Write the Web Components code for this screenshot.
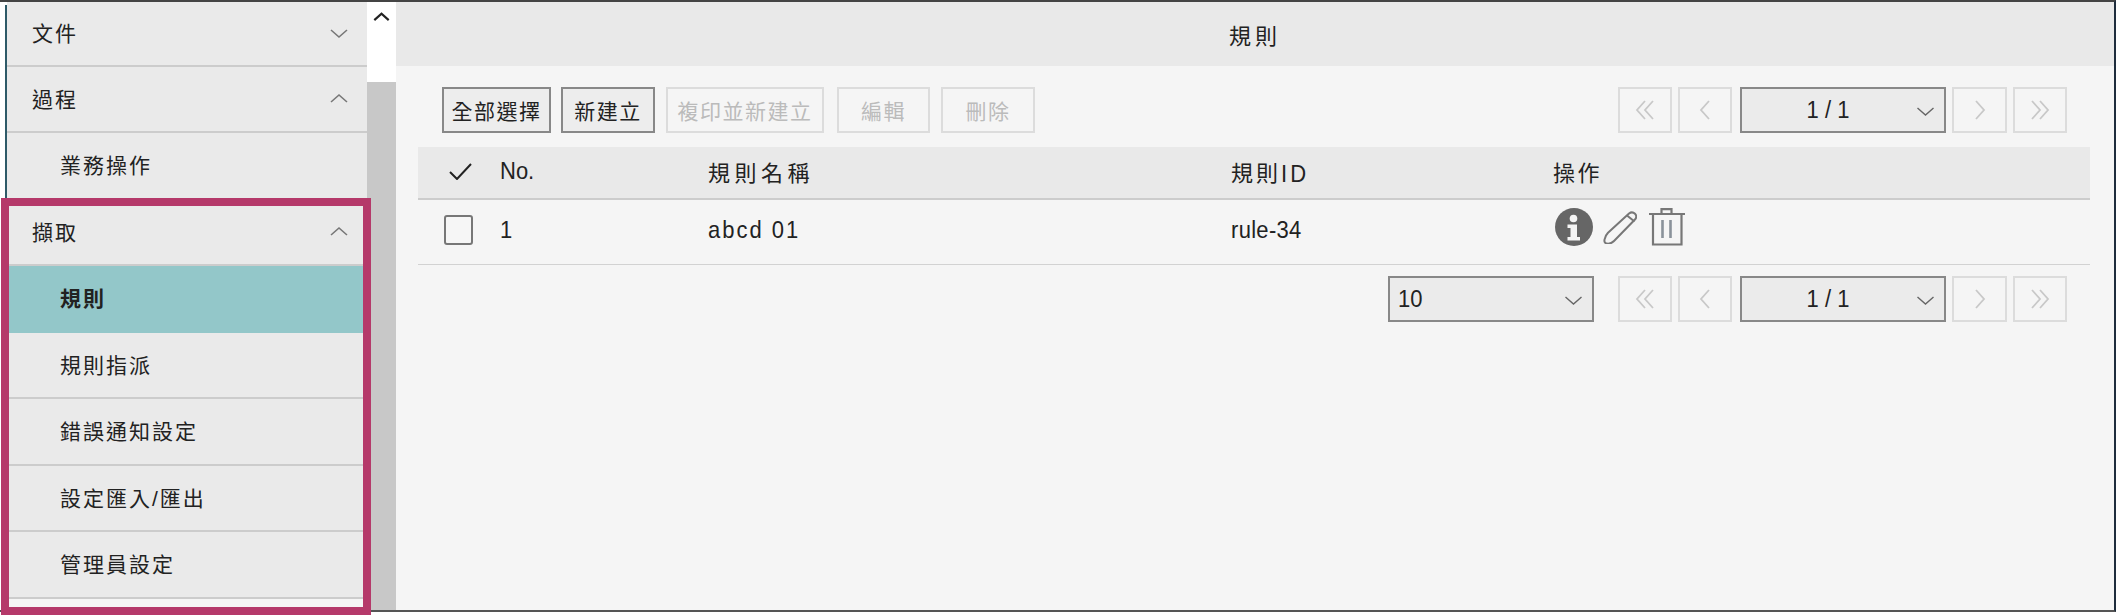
<!DOCTYPE html>
<html lang="zh-Hant">
<head>
<meta charset="utf-8">
<title>規則</title>
<style>
  html, body { margin: 0; padding: 0; background: #fff; }
  body { font-family: "Liberation Sans", "Noto Sans CJK TC", sans-serif; font-size: 21px; color: #222; }
</style>
</head>
<body>

<app-shell>
  <side-nav slot="nav">
    <nav-row kind="group" dir="down">文件</nav-row>
    <nav-row kind="group" dir="up">過程</nav-row>
    <nav-row>業務操作</nav-row>
    <nav-row kind="group" dir="up">擷取</nav-row>
    <nav-row active>規則</nav-row>
    <nav-row>規則指派</nav-row>
    <nav-row>錯誤通知設定</nav-row>
    <nav-row>設定匯入/匯出</nav-row>
    <nav-row>管理員設定</nav-row>
  </side-nav>

  <rules-page slot="main"></rules-page>
</app-shell>

<script>
const FONT = `"Liberation Sans", "Noto Sans CJK TC", sans-serif`;

const chevrons = {
  up: '<polyline points="1,9 9,2 17,9"/>',
  down: '<polyline points="1,2 9,9 17,2"/>',
  left: '<polyline points="10,1 2,10 10,19"/>',
  right: '<polyline points="2,1 10,10 2,19"/>',
  first: '<polyline points="10,1 2,10 10,19"/><polyline points="18,1 10,10 18,19"/>',
  last: '<polyline points="2,1 10,10 2,19"/><polyline points="10,1 18,10 10,19"/>'
};

class AppShell extends HTMLElement {
  constructor(...args) {
    super(...args);
    this.attachShadow({ mode: 'open' }).innerHTML = `
      <style>
        :host { display: block; width: 2116px; height: 616px; box-sizing: border-box; padding-bottom: 4px; background: #fff; }
        .frame {
          display: flex; height: 100%; box-sizing: border-box;
          border-top: 2px solid #444; border-bottom: 2px solid #555; border-right: 2px solid #1f2d3d;
          position: relative;
        }
        .gutter { width: 5px; flex: none; background: #fff; }
        .nav { width: 362px; flex: none; display: flex; }
        .scroll { width: 29px; flex: none; display: flex; flex-direction: column; background: #c8c8c8; }
        .thumb-top { height: 80px; background: #fff; display: flex; justify-content: center; padding-top: 10px; box-sizing: border-box; }
        .thumb-top svg { width: 17px; height: 9px; fill: none; stroke: #222; stroke-width: 2.4; }
        .main { flex: 1; min-width: 0; display: flex; }
        .mark {
          position: absolute; left: 1px; top: 196px; width: 370px; height: 417px; box-sizing: border-box;
          border: 8.5px solid #b5396a; pointer-events: none;
        }
      </style>
      <div class="frame">
        <div class="gutter"></div>
        <div class="nav"><slot name="nav"></slot></div>
        <div class="scroll">
          <div class="thumb-top"><svg viewBox="0 0 18 10"><polyline points="1,9 9,2 17,9"/></svg></div>
        </div>
        <div class="main"><slot name="main"></slot></div>
        <div class="mark"></div>
      </div>`;
  }
}

class SideNav extends HTMLElement {
  constructor(...args) {
    super(...args);
    this.attachShadow({ mode: 'open' }).innerHTML = `
      <style>
        :host { display: block; flex: 1; box-sizing: border-box; border-left: 2px solid #2e5a68; background: #f5f5f5; margin-top: 3px; }
        .list { display: flex; flex-direction: column; margin-top: -3px; }
        ::slotted(:first-child) { height: 64.5px; }
      </style>
      <div class="list"><slot></slot></div>`;
  }
}

class NavRow extends HTMLElement {
  constructor(...args) {
    super(...args);
    const dir = this.getAttribute('dir');
    const group = this.getAttribute('kind') === 'group';
    this.attachShadow({ mode: 'open' }).innerHTML = `
      <style>
        :host {
          display: flex; align-items: center; justify-content: space-between; height: 66.5px; box-sizing: border-box;
          padding: 0 19px 0 ${group ? 25 : 53}px; background: #eaeaea; border-bottom: 2px solid #ccc;
          font: 21px ${FONT}; letter-spacing: 2px; color: #222;
        }
        :host([active]) { background: #93c7c9; border-bottom-color: #93c7c9; font-weight: 700; }
        span { padding-bottom: 2px; }
        svg { width: 18px; height: 11px; fill: none; stroke: #777; stroke-width: 1.6; }
      </style>
      <span><slot></slot></span>
      ${group ? `<svg viewBox="0 0 18 11">${chevrons[dir]}</svg>` : ''}`;
  }
}

class ToolButton extends HTMLElement {
  constructor(...args) {
    super(...args);
    this.attachShadow({ mode: 'open' }).innerHTML = `
      <style>
        :host {
          display: inline-flex; align-items: center; justify-content: center; height: 46px; flex: none; box-sizing: border-box;
          border: 2px solid #888; background: #ededed; color: #222; font: 21px ${FONT}; letter-spacing: 1.5px; white-space: nowrap;
        }
        :host([disabled]) { border-color: #dcdcdc; background: #f5f5f5; color: #bbb; }
      </style>
      <slot></slot>`;
  }
}

class PagerButton extends HTMLElement {
  constructor(...args) {
    super(...args);
    const dir = this.getAttribute('dir');
    const w = dir === 'first' || dir === 'last' ? 20 : 12;
    this.attachShadow({ mode: 'open' }).innerHTML = `
      <style>
        :host {
          display: inline-flex; align-items: center; justify-content: center; width: 54px; height: 46px; flex: none;
          box-sizing: border-box; border: 2px solid #dcdcdc; background: #f5f5f5;
        }
        svg { width: ${w}px; height: 20px; fill: none; stroke: #c8c8c8; stroke-width: 1.8; }
      </style>
      <svg viewBox="0 0 ${w} 20">${chevrons[dir]}</svg>`;
  }
}

class SelectBox extends HTMLElement {
  constructor(...args) {
    super(...args);
    this.attachShadow({ mode: 'open' }).innerHTML = `
      <style>
        :host {
          display: inline-flex; align-items: center; height: 46px; flex: none; box-sizing: border-box;
          border: 2px solid #888; background: #ebebeb; color: #222;
        }
        .val { flex: 1; font: 22px ${FONT}; transform: scaleY(1.1); }
        :host([center]) .val { text-align: center; padding-right: 2px; }
        :host(:not([center])) .val { padding-left: 8px; }
        svg { width: 19px; height: 11px; margin: 2px 9px 0 0; fill: none; stroke: #666; stroke-width: 1.4; }
      </style>
      <span class="val"><slot></slot></span>
      <svg viewBox="0 0 18 11">${chevrons.down}</svg>`;
  }
}

class PagerBar extends HTMLElement {
  constructor(...args) {
    super(...args);
    this.attachShadow({ mode: 'open' }).innerHTML = `
      <style>
        :host { display: flex; align-items: center; gap: 6px; flex: none; }
        select-box { width: 206px; margin-left: 2px; }
      </style>
      <pager-button dir="first"></pager-button>
      <pager-button dir="left"></pager-button>
      <select-box center>1 / 1</select-box>
      <pager-button dir="right" style="width:55px"></pager-button>
      <pager-button dir="last"></pager-button>`;
  }
}

class InfoIcon extends HTMLElement {
  constructor(...args) {
    super(...args);
    this.attachShadow({ mode: 'open' }).innerHTML = `
      <style>:host { display: block; width: 38px; height: 38px; flex: none; } svg { display: block; }</style>
      <svg width="38" height="38" viewBox="0 0 38 38">
        <circle cx="19" cy="19" r="19" fill="#666"/>
        <circle cx="18.500" cy="10.500" r="3.800" fill="#f5f5f5"/>
        <path d="M12.500 16.500h9.500v12.500h3v3.500h-12.500v-3.500h3v-9h-3z" fill="#f5f5f5"/>
      </svg>`;
  }
}

class PencilIcon extends HTMLElement {
  constructor(...args) {
    super(...args);
    this.attachShadow({ mode: 'open' }).innerHTML = `
      <style>:host { display: block; width: 34px; height: 33px; flex: none; } svg { display: block; }</style>
      <svg width="34" height="33" viewBox="0 0 34 33" fill="none" stroke="#777" stroke-width="2" stroke-linejoin="round">
        <path d="M26 2.500c2-1.500 4.500-1.200 6 .3s1.500 3.800.2 5.500L11 30c-2 2-5 3-7.500 2.500-1.800-.3-2.300-2-2-3.800.4-2.500 1.500-5 3.500-7z"/>
        <path d="M24 4.500l7.500 6"/>
      </svg>`;
  }
}

class TrashIcon extends HTMLElement {
  constructor(...args) {
    super(...args);
    this.attachShadow({ mode: 'open' }).innerHTML = `
      <style>:host { display: block; width: 36px; height: 38px; flex: none; } svg { display: block; }</style>
      <svg width="36" height="38" viewBox="0 0 36 38" fill="none" stroke="#777" stroke-width="2.200">
        <path d="M0 6h36"/>
        <path d="M12.500 5.500V1.200h10V5.500"/>
        <path d="M4 6V36.500h28.500V6"/>
        <path d="M13.500 12v18M21.500 12v18" stroke-width="2.600" stroke="#8a929a"/>
      </svg>`;
  }
}

class RuleTable extends HTMLElement {
  constructor(...args) {
    super(...args);
    this.attachShadow({ mode: 'open' }).innerHTML = `
      <style>
        :host { display: block; font: 22px ${FONT}; color: #222; }
        .row { display: grid; grid-template-columns: 82px 208px 523px 322px 1fr; align-items: center; }
        .head { height: 53px; box-sizing: border-box; padding-bottom: 3px; background: #e9e9e9; border-bottom: 2px solid #ccc; }
        .body { height: 64.5px; box-sizing: border-box; padding-bottom: 3px; border-bottom: 1.5px solid #d2d2d2; }
        .cell { letter-spacing: 2.5px; white-space: nowrap; }
        .lat { display: inline-block; transform: scaleY(1.1); letter-spacing: 0; }
        .check { padding-left: 31px; display: flex; }
        .check svg { width: 23px; height: 17px; fill: none; stroke: #222; stroke-width: 2; }
        .box { width: 29px; height: 30px; box-sizing: border-box; margin-left: 26px; border: 2px solid #777; border-radius: 3px; background: #f6f6f6; }
        .ops { display: flex; align-items: center; margin: 0 0 6px 2px; }
        pencil-icon { margin: 0 12px 0 10px; }
      </style>
      <div class="row head">
        <div class="check"><svg viewBox="0 0 23 17"><polyline points="1,9 8,16 22,1"/></svg></div>
        <div class="cell"><span class="lat">No.</span></div>
        <div class="cell" style="letter-spacing:4.500px">規則名稱</div>
        <div class="cell" style="letter-spacing:3px">規則<span class="lat" style="letter-spacing:3px">ID</span></div>
        <div class="cell">操作</div>
      </div>
      <div class="row body">
        <div><div class="box"></div></div>
        <div class="cell"><span class="lat">1</span></div>
        <div class="cell"><span class="lat" style="letter-spacing:2px">abcd 01</span></div>
        <div class="cell"><span class="lat" style="letter-spacing:.3px">rule-34</span></div>
        <div class="ops"><info-icon></info-icon><pencil-icon></pencil-icon><trash-icon></trash-icon></div>
      </div>`;
  }
}

class RulesPage extends HTMLElement {
  constructor(...args) {
    super(...args);
    this.attachShadow({ mode: 'open' }).innerHTML = `
      <style>
        :host { display: flex; flex-direction: column; flex: 1; min-width: 0; background: #f5f5f5; font: 22px ${FONT}; color: #222; }
        .title { height: 64px; flex: none; display: flex; align-items: center; justify-content: center; background: #e9e9e9; letter-spacing: 4px; box-sizing: border-box; }
        .content { padding: 21px 24px 0 22px; display: flex; flex-direction: column; }
        .tools { display: flex; align-items: center; height: 46px; padding: 0 23px 0 24px; margin-bottom: 14px; }
        .btns { display: flex; flex: 1; }
        .foot { display: flex; align-items: center; justify-content: flex-end; gap: 24px; margin-top: 11.5px; padding-right: 23px; }
        .foot select-box { width: 206px; }
      </style>
      <div class="title">規則</div>
      <div class="content">
        <div class="tools">
          <div class="btns">
            <tool-button style="width:109px;margin-right:10px">全部選擇</tool-button>
            <tool-button style="width:94px;margin-right:11px">新建立</tool-button>
            <tool-button disabled style="width:158px;margin-right:13px">複印並新建立</tool-button>
            <tool-button disabled style="width:93px;margin-right:11px">編輯</tool-button>
            <tool-button disabled style="width:94px">刪除</tool-button>
          </div>
          <pager-bar></pager-bar>
        </div>
        <rule-table></rule-table>
        <div class="foot">
          <select-box>10</select-box>
          <pager-bar></pager-bar>
        </div>
      </div>`;
  }
}

customElements.define('nav-row', NavRow);
customElements.define('side-nav', SideNav);
customElements.define('tool-button', ToolButton);
customElements.define('pager-button', PagerButton);
customElements.define('select-box', SelectBox);
customElements.define('pager-bar', PagerBar);
customElements.define('info-icon', InfoIcon);
customElements.define('pencil-icon', PencilIcon);
customElements.define('trash-icon', TrashIcon);
customElements.define('rule-table', RuleTable);
customElements.define('rules-page', RulesPage);
customElements.define('app-shell', AppShell);
</script>
</body>
</html>
